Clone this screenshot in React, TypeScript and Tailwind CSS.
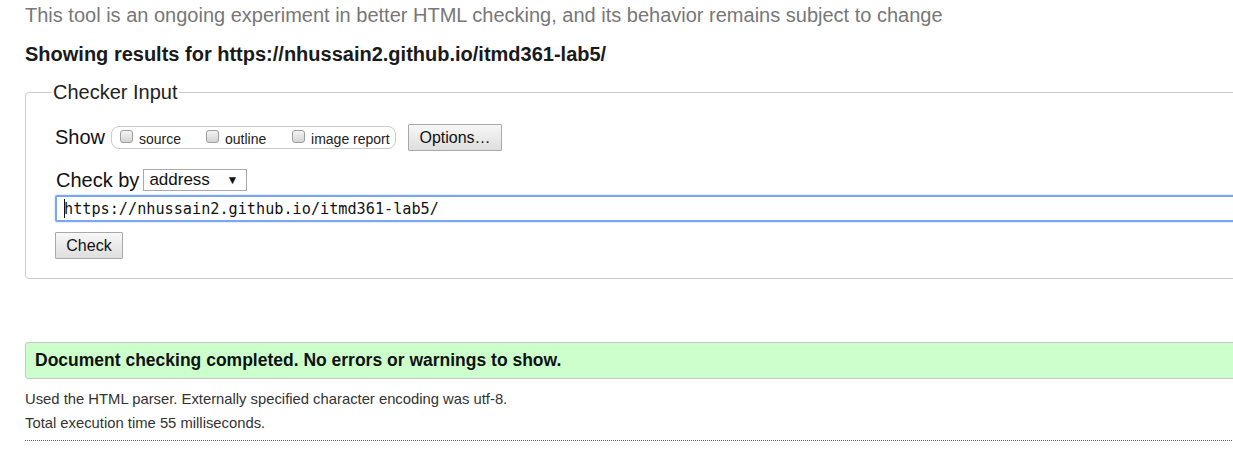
import React from 'react';

function Box({ label }: { label: string }) {
  return (
    <label className="flex items-start">
      <span className="mt-[2px] block h-[13px] w-[13px] rounded-[3px] border border-[#9e9e9e] bg-linear-to-b from-[#f4f4f4] to-[#d4d4d4]" />
      <span className="ml-[6px] mt-[3px] text-[14px] leading-[17px] text-[#222]">{label}</span>
    </label>
  );
}

function Btn({ children, className = '' }: { children: React.ReactNode; className?: string }) {
  return (
    <div
      className={`flex h-[27px] items-center justify-center rounded-[1px] border border-[#a9a9a9] bg-linear-to-b from-[#f7f7f7] to-[#dedede] text-[16px] text-[#111] ${className}`}
    >
      {children}
    </div>
  );
}

export default function App() {
  return (
    <div className="h-[476px] w-full overflow-hidden bg-white font-['Liberation_Sans',Arial,sans-serif] text-[#111]">
      <div className="w-[1300px] pl-[25px]">
        <p className="pt-[4px] text-[20px] leading-[23px] text-[#777]">
          This tool is an ongoing experiment in better HTML checking, and its behavior remains subject to change
        </p>
        <h2 className="mt-[16px] text-[20px] font-bold leading-[23px] text-[#1a1a1a]">
          Showing results for https://nhussain2.github.io/itmd361-lab5/
        </h2>

        <fieldset className="mt-[15px] rounded-[4px] border border-[#cccccc] pb-[19px] pl-[29px] pt-[20px]">
          <legend className="-ml-[3px] px-[1px] text-[20px] leading-[23px] text-[#222]">Checker Input</legend>

          <div className="flex h-[27px] items-center">
            <span className="text-[20px] leading-[23px]">Show</span>
            <div className="ml-[6px] flex h-[23px] w-[285px] items-start rounded-[8px] border border-[#cccccc] pl-[8px] pt-[1px]">
              <div className="w-[86px]">
                <Box label="source" />
              </div>
              <div className="w-[86px]">
                <Box label="outline" />
              </div>
              <Box label="image report" />
            </div>
            <Btn className="ml-[12px] w-[94px]">Options…</Btn>
          </div>

          <div className="mt-[18px] flex h-[22px] items-center">
            <span className="ml-[1px] text-[20px] leading-[23px]">Check by</span>
            <div className="ml-[4px] flex h-[22px] w-[104px] items-center justify-between border border-[#a9a9a9] bg-white pl-[5px] pr-[8px]">
              <span className="text-[17px] leading-[20px]">address</span>
              <span className="text-[12px] leading-[12px]">▼</span>
            </div>
          </div>

          <div className="mt-[4px] flex h-[27px] items-center rounded-[2px] border-2 border-[#7aa7ef] pl-[7px] shadow-[0_0_2px_#9cc0f5]">
            <span className="h-[19px] w-[1px] bg-[#111]" />
            <span className="-ml-[1px] font-['DejaVu_Sans_Mono',monospace] text-[15.2px] leading-[20px] text-[#111]">
              https://nhussain2.github.io/itmd361-lab5/
            </span>
          </div>

          <Btn className="mt-[10px] w-[68px]">Check</Btn>
        </fieldset>

        <div className="mt-[63px] flex h-[37px] items-center rounded-[3px] border border-[#c6c6c6] bg-[#ccffcc] pl-[9px]">
          <span className="text-[17.5px] font-bold text-[#111]">
            Document checking completed. No errors or warnings to show.
          </span>
        </div>

        <p className="mt-[10px] text-[14.8px] leading-[20px] text-[#333]">
          Used the HTML parser. Externally specified character encoding was utf-8.
        </p>
        <p className="mt-[4px] text-[14.8px] leading-[20px] text-[#333]">Total execution time 55 milliseconds.</p>
        <div className="mt-[7px] border-t border-dotted border-[#666]" />
      </div>
    </div>
  );
}
